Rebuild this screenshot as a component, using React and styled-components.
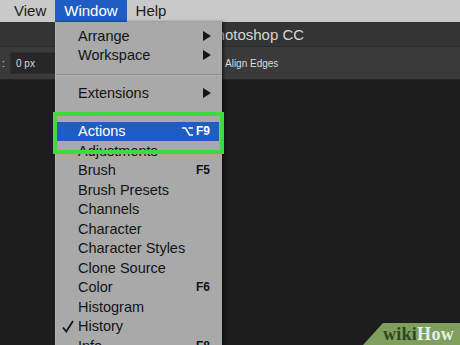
import styled, { createGlobalStyle } from 'styled-components'

const GlobalStyle = createGlobalStyle`
  html, body { margin: 0; padding: 0; background: #1d1d1d; }
  * { box-sizing: border-box; }
`;

const Screen = styled.div`
  position: relative;
  width: 460px;
  height: 345px;
  overflow: hidden;
  display: flex;
  flex-direction: column;
  background: #1d1d1d;
  font-family: "Liberation Sans", Arial, sans-serif;
`;

const MenuBar = styled.div`
  height: 22px;
  flex: none;
  display: flex;
  padding-left: 5px;
  background: #c9c9c9;
`;

const MenuTitle = styled.div`
  padding: 0 9px;
  font-size: 15px;
  line-height: 22px;
  color: ${p => (p.$active ? '#ffffff' : '#1b1b1b')};
  background: ${p => (p.$active ? '#1f5dc3' : 'transparent')};
`;

const TitleBar = styled.div`
  height: 24px;
  flex: none;
  display: flex;
  align-items: center;
  padding-left: 159px;
  background: #343434;
  color: #d6d6d6;
  font-size: 15px;
`;

const OptionsBar = styled.div`
  height: 34px;
  flex: none;
  display: flex;
  align-items: center;
  background: #3a3a3a;
  border-top: 1px solid #2a2a2a;
  border-bottom: 1px solid #262626;
  color: #dcdcdc;
  font-size: 10px;
`;

const FieldLabel = styled.span`
  width: 10px;
  padding-left: 2px;
`;

const Field = styled.div`
  width: 70px;
  height: 22px;
  display: flex;
  align-items: center;
  padding-left: 5px;
  background: #272727;
  border: 1px solid #2f2f2f;
`;

const CheckOption = styled.label`
  display: flex;
  align-items: center;
  gap: 3px;
  margin-left: 131px;
`;

const CheckBox = styled.span`
  width: 11px;
  height: 11px;
  border: 1px solid #888;
  background: #4a4a4a;
`;

const Canvas = styled.div`
  flex: 1;
  background: #1d1d1d;
`;

const Dropdown = styled.div`
  position: absolute;
  left: 55px;
  top: 22px;
  width: 167px;
  height: 330px;
  padding-top: 4px;
  background: #a9a9a9;
  border-left: 1px solid #b4b4b4;
  box-shadow: 2px 0 3px rgba(0, 0, 0, 0.5);
`;

const Item = styled.div`
  height: 19.5px;
  display: flex;
  align-items: center;
  margin: 0 3px 0 1px;
  padding-right: 8px;
  font-size: 14.5px;
  color: ${p => (p.$selected ? '#ffffff' : '#141414')};
  background: ${p => (p.$selected ? '#1f5dc3' : 'transparent')};
`;

const Gutter = styled.span`
  width: 21px;
  flex: none;
  display: flex;
  align-items: center;
  padding-left: 5px;
`;

const Label = styled.span`
  flex: 1;
  white-space: nowrap;
`;

const Shortcut = styled.span`
  display: flex;
  align-items: center;
  gap: 3px;
  font-size: 12px;
  font-weight: bold;
  padding-right: 1px;
`;

const Separator = styled.div`
  height: 18.5px;
  display: flex;
  align-items: center;
  &::after {
    content: '';
    flex: 1;
    height: 1px;
    background: #8f8f8f;
    box-shadow: 0 1px 0 #b3b3b3;
  }
`;

const Highlight = styled.div`
  position: absolute;
  left: -3px;
  top: 90px;
  width: 171px;
  height: 42px;
  border: 4px solid #3bdc3b;
`;

const Watermark = styled.div`
  position: absolute;
  right: 0;
  bottom: 0;
  width: 97px;
  height: 22px;
  display: flex;
  align-items: center;
  justify-content: flex-end;
  padding-right: 6px;
  background: #809f5f;
  clip-path: polygon(20px 0, 100% 0, 100% 100%, 0 100%);
  font-family: "Liberation Serif", "Times New Roman", serif;
  font-weight: bold;
  font-size: 18px;
  letter-spacing: 0.3px;
`;

const Wiki = styled.span`
  color: #2c4620;
`;

const How = styled.span`
  color: #e8efe2;
`;

const Arrow = () => (
  <svg width="8" height="10" viewBox="0 0 8 10">
    <polygon points="0,0 8,5 0,10" fill="#151515" />
  </svg>
);

const Check = () => (
  <svg width="12" height="13" viewBox="0 0 12 13">
    <path d="M1 7.5 L4.3 11.5 L11 1" fill="none" stroke="#151515" strokeWidth="1.8" />
  </svg>
);

const OptionKey = () => (
  <svg width="11" height="9" viewBox="0 0 11 9">
    <path d="M0 1 H3.5 L7.5 8 H11 M6.5 1 H11" fill="none" stroke="#ffffff" strokeWidth="1.6" />
  </svg>
);

const menu = [
  { label: 'Arrange', arrow: true },
  { label: 'Workspace', arrow: true },
  { sep: true },
  { label: 'Extensions', arrow: true },
  { sep: true },
  { label: 'Actions', selected: true, option: true, key: 'F9' },
  { label: 'Adjustments' },
  { label: 'Brush', key: 'F5' },
  { label: 'Brush Presets' },
  { label: 'Channels' },
  { label: 'Character' },
  { label: 'Character Styles' },
  { label: 'Clone Source' },
  { label: 'Color', key: 'F6' },
  { label: 'Histogram' },
  { label: 'History', checked: true },
  { label: 'Info', key: 'F8' },
];

export default function App() {
  return (
    <Screen>
      <GlobalStyle />
      <MenuBar>
        <MenuTitle>View</MenuTitle>
        <MenuTitle $active>Window</MenuTitle>
        <MenuTitle>Help</MenuTitle>
      </MenuBar>
      <TitleBar>Adobe Photoshop CC</TitleBar>
      <OptionsBar>
        <FieldLabel>:</FieldLabel>
        <Field>0 px</Field>
        <CheckOption>
          <CheckBox />
          Align Edges
        </CheckOption>
      </OptionsBar>
      <Canvas />

      <Dropdown>
        {menu.map((m, i) =>
          m.sep ? (
            <Separator key={i} />
          ) : (
            <Item key={i} $selected={m.selected}>
              <Gutter>{m.checked && <Check />}</Gutter>
              <Label>{m.label}</Label>
              {m.arrow && <Arrow />}
              {m.key && (
                <Shortcut>
                  {m.option && <OptionKey />}
                  {m.key}
                </Shortcut>
              )}
            </Item>
          )
        )}
        <Highlight />
      </Dropdown>

      <Watermark>
        <Wiki>wiki</Wiki>
        <How>How</How>
      </Watermark>
    </Screen>
  );
}
